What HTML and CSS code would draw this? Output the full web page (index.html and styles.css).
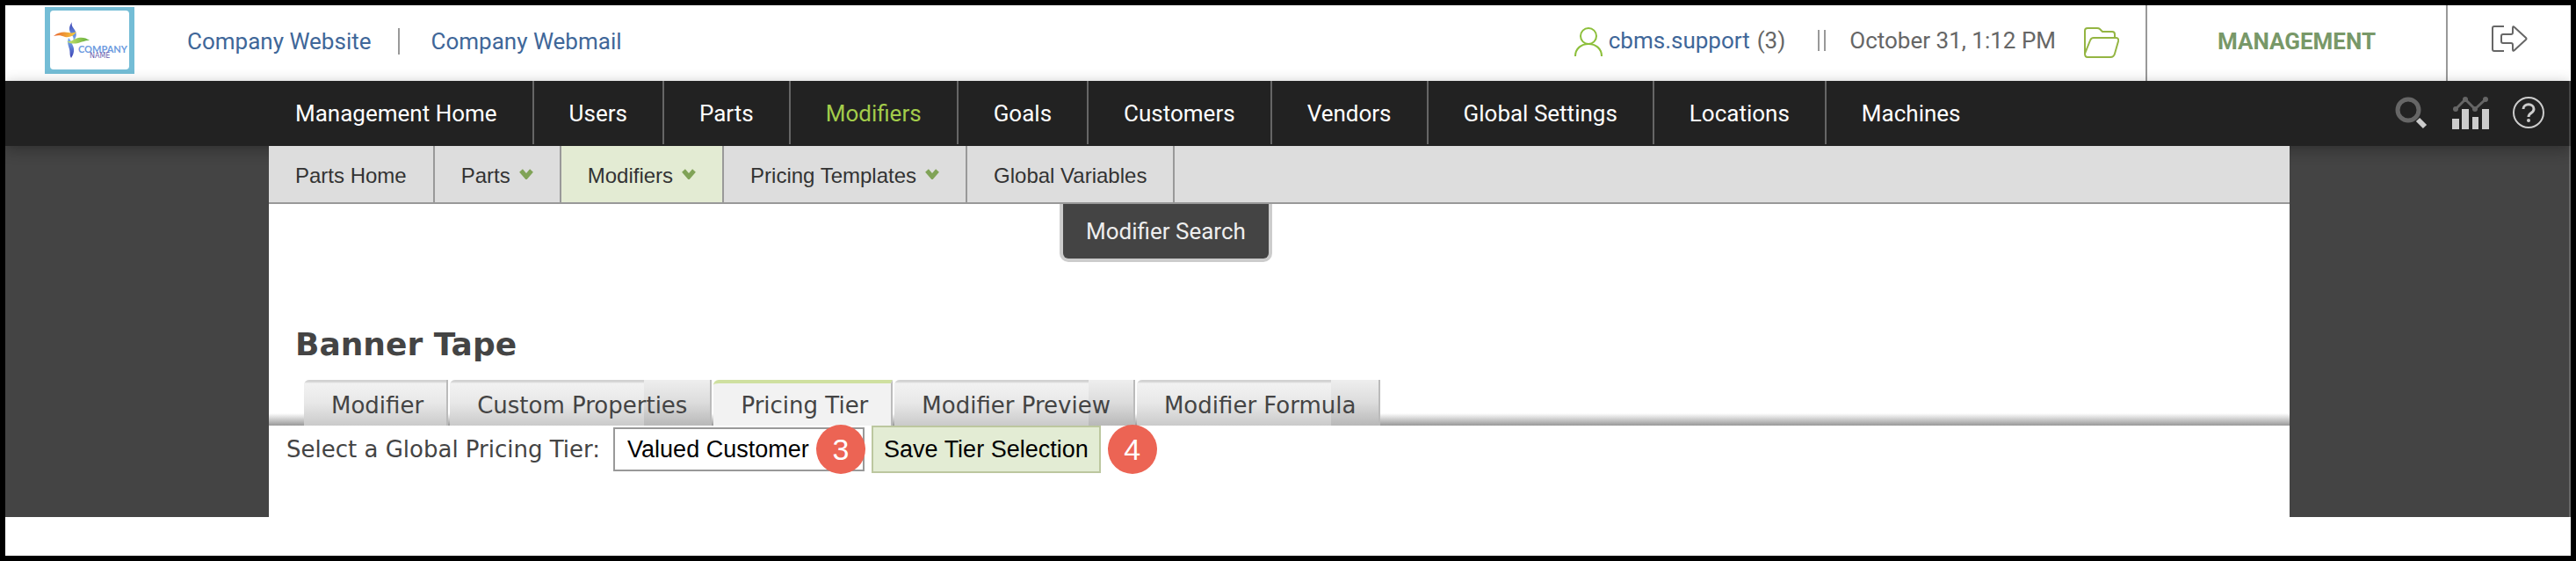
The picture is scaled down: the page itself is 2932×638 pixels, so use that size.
FILE: index.html
```
<!doctype html>
<html lang="en">

<head>
  <meta charset="UTF-8" />
  <meta name="viewport" content="width=device-width, initial-scale=1.0" />
  <title>Banner Tape - Modifiers</title>
  <link rel="stylesheet" href="styles.css">
</head>

<body>
  <header class="topbar">
    <a href="#" class="logo" aria-label="Company Name">
      <svg width="102" height="76" viewBox="0 0 102 76">
        <defs>
          <linearGradient id="blue" x1="0" y1="0" x2="0" y2="1">
            <stop offset="0" stop-color="#3b3fb5" />
            <stop offset="1" stop-color="#7fb8ee" />
          </linearGradient>
          <linearGradient id="blueDown" x1="0" y1="0" x2="0" y2="1">
            <stop offset="0" stop-color="#7fb8ee" />
            <stop offset="1" stop-color="#3b3fb5" />
          </linearGradient>
          <linearGradient id="orange">
            <stop offset="0" stop-color="#e8622c" />
            <stop offset="1" stop-color="#f5d33f" />
          </linearGradient>
          <linearGradient id="green">
            <stop offset="0" stop-color="#cfe36a" />
            <stop offset="1" stop-color="#5fae3c" />
          </linearGradient>
        </defs>
        <rect width="102" height="76" fill="#74bdd6" />
        <rect x="6" y="4" width="90" height="67" rx="4" fill="#fff" />
        <path d="M31 17c-5 7-3 11 0 15 2 3 2 5 1 7 4-4 5-8 2-13-3-4-4-6-3-9z" fill="url(#blue)" />
        <path d="M27 35c-2 5 0 9 1 13 1 4 0 7 2 10 4-6 4-11 1-16-1-3-2-5-4-7z" fill="url(#blueDown)" />
        <path d="M10 33c6-5 12-5 17-4 4 1 7 0 9-1-3 5-8 7-13 6-5-2-8-2-13-1z" fill="url(#orange)" />
        <path d="M25 39c6 1 8-3 13-4 5-1 9 0 13 3-6 0-9 2-13 3-5 1-9 1-13-2z" fill="url(#green)" />
        <text x="38" y="52" class="logo-name">COMPANY</text>
        <text x="51" y="58" class="logo-sub">NAME</text>
      </svg>
    </a>
    <div class="company-links">
      <a href="#">Company Website</a>
      <a href="#">Company Webmail</a>
    </div>

    <div class="account">
      <a href="#" class="user">
        <svg width="32" height="34" viewBox="0 0 32 34" fill="none" stroke="#8cbf3a" stroke-width="2">
          <ellipse cx="16" cy="10" rx="9" ry="9" />
          <path d="M1 33C1 24 8 19 16 19s15 5 15 14" />
        </svg>
        cbms.support
      </a>
      <span class="count">(3)</span>
      <span class="bars"></span>
      <span class="clock">October 31, 1:12 PM</span>
      <a href="#" class="folder" aria-label="Files">
        <svg width="40" height="36" viewBox="0 0 40 36" fill="none" stroke="#94b542" stroke-width="2" stroke-linejoin="round">
          <path d="M1 30V4q0-3 3-3h11q2 0 3 1l3 3h11q3 0 3 3v4" />
          <path d="M1 30 7 15q1-3 4-3h25q4 0 3 4l-4 14q-1 4-5 4H4q-3 0-3-4z" />
        </svg>
      </a>
    </div>
    <a href="#" class="management">MANAGEMENT</a>
    <a href="#" class="logout" aria-label="Log out">
      <svg width="42" height="32" viewBox="0 0 42 32" fill="none" stroke="#666" stroke-width="2" stroke-linejoin="round">
        <path d="M15 2H4Q2 2 2 4v24q0 2 2 2h11" />
        <path d="M14 11h9q2 0 2-2V4q0-3 2-1l13 12q1 1 0 2L27 29q-2 2-2-1v-5q0-2-2-2h-9q-2 0-2-2v-6q0-2 2-2z" />
      </svg>
    </a>
  </header>

  <nav class="navbar">
    <div class="nav-links">
      <a href="#">Management Home</a>
      <a href="#">Users</a>
      <a href="#">Parts</a>
      <a href="#" class="active">Modifiers</a>
      <a href="#">Goals</a>
      <a href="#">Customers</a>
      <a href="#">Vendors</a>
      <a href="#">Global Settings</a>
      <a href="#">Locations</a>
      <a href="#">Machines</a>
    </div>
    <div class="nav-tools">
      <a href="#" aria-label="Search">
        <svg width="38" height="38" viewBox="0 0 38 38" fill="none">
          <circle cx="15" cy="16" r="12" stroke="#666" stroke-width="5" />
          <path d="m26 27 8 8" stroke="#ccc" stroke-width="6" />
        </svg>
      </a>
      <a href="#" aria-label="Reports">
        <svg width="42" height="38" viewBox="0 0 42 38">
          <path d="M4 15 15 4l11 11L38 4" fill="none" stroke="#666" stroke-width="3" />
          <g fill="#666">
            <circle cx="4" cy="15" r="3" />
            <circle cx="15" cy="4" r="3" />
            <circle cx="26" cy="15" r="3" />
            <circle cx="38" cy="4" r="3" />
          </g>
          <path d="M0 26h8v12H0zM11 15h8v23h-8zM23 24h7v14h-7zM34 15h8v23h-8z" fill="#ccc" />
        </svg>
      </a>
      <a href="#" aria-label="Help">
        <svg width="36" height="36" viewBox="0 0 36 36" fill="none" stroke="#ccc" stroke-width="2">
          <circle cx="18" cy="18" r="17" />
          <path d="M12 14c0-7 12-7 12 0 0 5-6 4-6 9" stroke-width="3" />
          <circle cx="18" cy="27" r="2" fill="#ccc" stroke="none" />
        </svg>
      </a>
    </div>
  </nav>

  <div class="page">
    <main>
      <nav class="subnav">
        <a href="#">Parts Home</a>
        <a href="#">Parts <svg class="arrow" viewBox="0 0 16 12"><path d="m2 2 6 7 6-7" /></svg></a>
        <a href="#" class="active">Modifiers <svg class="arrow" viewBox="0 0 16 12"><path d="m2 2 6 7 6-7" /></svg></a>
        <a href="#">Pricing Templates <svg class="arrow" viewBox="0 0 16 12"><path d="m2 2 6 7 6-7" /></svg></a>
        <a href="#">Global Variables</a>
        <a href="#" class="dropdown">Modifier Search</a>
      </nav>

      <h1>Banner Tape</h1>

      <div class="tabs" role="tablist">
        <button type="button" role="tab">Modifier</button>
        <button type="button" role="tab">Custom Properties</button>
        <button type="button" role="tab" class="active" aria-selected="true">Pricing Tier</button>
        <button type="button" role="tab">Modifier Preview</button>
        <button type="button" role="tab">Modifier Formula</button>
      </div>

      <form class="tier-form">
        <label for="tier">Select a Global Pricing Tier:</label>
        <div class="tier-select">
          <select id="tier">
            <option>Valued Customer</option>
          </select>
          <span class="step">3</span>
        </div>
        <button type="button" class="save-btn">Save Tier Selection</button>
        <span class="step">4</span>
      </form>
    </main>
  </div>
</body>

</html>
```

FILE: styles.css
```
* {
  box-sizing: border-box;
}

body {
  font-family: Roboto, Arial, sans-serif;
  font-size: 26px;
  background-color: white;
  color: #666;
  margin: 0;
  min-height: 100vh;
  border: 6px solid #000;
}

a {
  text-decoration: none;
  color: #3f6799;
}

svg {
  display: block;
  flex: none;
}

/* top bar */
.topbar {
  display: flex;
  align-items: center;
  height: 86px;
  padding-left: 45px;
}

.logo {
  margin-right: 60px;
  padding-bottom: 6px;
}

.logo-name {
  font: bold 11px Lato, sans-serif;
  fill: #6d9be0;
}

.logo-sub {
  font: 8px "DejaVu Sans", sans-serif;
  fill: #6a5fb0;
}

.company-links {
  display: flex;
  align-items: center;
  padding-bottom: 4px;
  line-height: 30px;
}

.company-links a + a {
  border-left: 2px solid #999;
  margin-left: 30px;
  padding-left: 36px;
}

.account {
  display: flex;
  align-items: center;
  margin-left: auto;
  padding: 0 30px 6px 0;
}

.user {
  display: flex;
  align-items: center;
  gap: 7px;
}

.user svg {
  margin-top: 4px;
}

.count {
  margin-left: 8px;
}

.bars {
  width: 9px;
  height: 24px;
  margin: 0 27px 0 37px;
  border: solid #999;
  border-width: 0 2px;
}

.folder {
  margin: 6px 0 0 32px;
}

.management,
.logout {
  display: flex;
  align-items: center;
  justify-content: center;
  align-self: stretch;
  padding-bottom: 4px;
  border-left: 2px solid #999;
}

.management {
  width: 342px;
  color: #789868;
  font-weight: 700;
}

.logout {
  width: 142px;
  padding-bottom: 10px;
}

/* main navigation */
.navbar {
  display: flex;
  justify-content: space-between;
  position: relative;
  background-color: #222;
  height: 74px;
  padding: 0 28px 2px 300px;
  border-right: 2px solid #444;
  box-shadow: 0 4px 16px rgba(0, 0, 0, 0.3);
}

.nav-links {
  display: flex;
}

.nav-links a {
  display: flex;
  align-items: center;
  padding: 2px 40px 0;
  border-right: 2px solid #666;
  color: #fff;
}

.nav-links a:first-child {
  padding-left: 30px;
}

.nav-links a:last-child {
  border-right: 0;
}

.nav-links a.active {
  color: #a3cc4b;
}

.nav-tools {
  display: flex;
  align-items: center;
  gap: 27px;
}

/* page body */
.page {
  background-color: #444;
  border-right: 2px solid #666;
  padding: 0 318px 0 300px;
}

main {
  background-color: #fff;
  padding-bottom: 50px;
}

.subnav {
  position: relative;
  display: flex;
  height: 66px;
  background-color: #ddd;
  border-bottom: 2px solid #999;
  font-family: "Liberation Sans", Arial, sans-serif;
  font-size: 24px;
}

.subnav a {
  display: flex;
  align-items: center;
  gap: 10px;
  padding: 4px 30px 0;
  border-right: 2px solid #999;
  color: #333;
}

.subnav a.active {
  background-color: #e3ebd3;
}

.arrow {
  width: 16px;
  height: 12px;
  margin-bottom: 4px;
  fill: none;
  stroke: #80a357;
  stroke-width: 5;
}

.subnav a.dropdown {
  position: absolute;
  top: 66px;
  left: 900px;
  padding: 16px 26px;
  background-color: #444;
  border: 4px solid #ccc;
  border-top: 0;
  border-radius: 0 0 10px 10px;
  color: #eee;
  font-family: Roboto, Arial, sans-serif;
  font-size: 26px;
  line-height: 30px;
}

h1 {
  margin: 0;
  padding: 138px 30px 18px;
  color: #444;
  font-family: "DejaVu Sans", Verdana, sans-serif;
  font-size: 36px;
  line-height: 44px;
}

.tabs {
  display: flex;
  gap: 2px;
  padding-left: 40px;
  background: linear-gradient(transparent 38px, #999) no-repeat;
}

.tabs button {
  height: 52px;
  padding: 6px 26px 0 31px;
  border: 0;
  border-right: 2px solid #bbb;
  border-radius: 6px 0 0 0;
  background: linear-gradient(#d2d2d2 2px, #f2f2f2 4px, #e8e8e8 50%, #cacaca) no-repeat 0 0 / 221px 100%,
    linear-gradient(#eee, #dcdcdc 50%, #b8b8b8);
  color: #444;
  font-family: "DejaVu Sans", Verdana, sans-serif;
  font-size: 26px;
}

.tabs button.active {
  border-top: 4px solid #cfe0a0;
  background: #f2f2f2;
  padding-top: 2px;
}

.tier-form {
  display: flex;
  align-items: center;
  height: 54px;
  padding-left: 20px;
  color: #444;
  font-family: "DejaVu Sans", Verdana, sans-serif;
}

.tier-select {
  display: flex;
  align-items: center;
  margin: 0 9px 0 15px;
}

.tier-select select {
  width: 286px;
  height: 50px;
  padding: 0 14px;
  appearance: none;
  background-color: #fff;
  border: 2px solid #999;
  border-radius: 0;
  color: #000;
  font-family: "Liberation Sans", Arial, sans-serif;
  font-size: 27px;
}

/* the step marker sits over the end of the select */
.tier-select .step {
  margin-left: -55px;
  margin-right: -2px;
}

.save-btn {
  height: 54px;
  padding: 0 12px;
  background-color: #e3ecd4;
  border: 2px solid #bcc79f;
  color: #000;
  font-family: "Liberation Sans", Arial, sans-serif;
  font-size: 27px;
}

.step {
  width: 56px;
  border-radius: 50%;
  background-color: #ec6454;
  color: #fff;
  font-family: "Liberation Sans", Arial, sans-serif;
  font-size: 34px;
  line-height: 56px;
  text-align: center;
  z-index: 1;
}

.save-btn + .step {
  margin-left: 8px;
}
```
